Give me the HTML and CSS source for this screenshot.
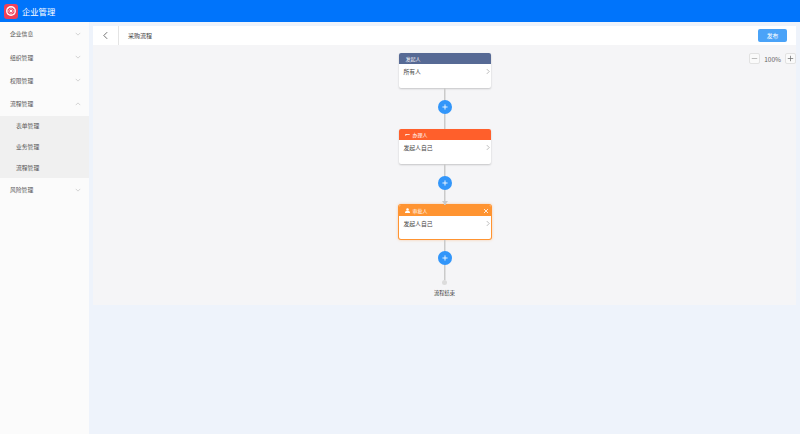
FILE: index.html
```html
<!DOCTYPE html>
<html lang="zh">
<head>
    <meta charset="utf-8">
    <title>企业管理</title>
    <link rel="stylesheet" href="styles.css">
</head>
<body>
<header class="topbar">
    <span class="logo">
        <svg viewBox="0 0 16 16" width="12" height="12">
            <circle cx="8" cy="8" r="6.6" fill="#fff"/>
            <circle cx="8" cy="8" r="4.800" fill="#f0455f"/>
            <circle cx="8" cy="8" r="1.800" fill="#fff"/>
            <path d="M8 3.500v2M8 10.500v2M3.500 8h2M10.500 8h2M4.800 4.800l1.400 1.400M9.800 9.800l1.400 1.400M11.200 4.800L9.800 6.200M6.200 9.800l-1.400 1.400" stroke="#fff" stroke-width="0.9"/>
        </svg>
    </span>
    <span class="brand">企业管理</span>
</header>
<div class="layout">
    <nav class="sidebar">
        <div class="menu-item">企业信息<svg class="caret" viewBox="0 0 8 5"><path d="M1 1l3 3 3-3"/></svg></div>
        <div class="menu-item">组织管理<svg class="caret" viewBox="0 0 8 5"><path d="M1 1l3 3 3-3"/></svg></div>
        <div class="menu-item">权限管理<svg class="caret" viewBox="0 0 8 5"><path d="M1 1l3 3 3-3"/></svg></div>
        <div class="menu-item">流程管理<svg class="caret" viewBox="0 0 8 5"><path d="M1 4l3-3 3 3"/></svg></div>
        <div class="submenu">
            <div class="sub-item">表单管理</div>
            <div class="sub-item">业务管理</div>
            <div class="sub-item">流程管理</div>
        </div>
        <div class="menu-item">风险管理<svg class="caret" viewBox="0 0 8 5"><path d="M1 1l3 3 3-3"/></svg></div>
    </nav>
    <main class="content">
        <div class="toolbar">
            <span class="back">
                <svg viewBox="0 0 6 10" width="5" height="9"><path d="M5 1L1 5l4 4" fill="none" stroke="#555" stroke-width="1"/></svg>
            </span>
            <span class="page-title">采购流程</span>
            <button class="publish">发布</button>
        </div>
        <div class="canvas">
            <div class="zoom">
                <span class="zoom-btn">
                    <svg viewBox="0 0 9 9" width="7" height="7"><path d="M1 4.500h7" stroke="#aaa"/></svg>
                </span>
                <span class="zoom-val">100%</span>
                <span class="zoom-btn">
                    <svg viewBox="0 0 9 9" width="7" height="7"><path d="M1 4.500h7M4.500 1v7" stroke="#777"/></svg>
                </span>
            </div>

            <div class="node">
                <div class="node-head head-start"><span class="head-text">发起人</span></div>
                <div class="node-body">所有人<svg class="arrow" viewBox="0 0 5 8"><path d="M1 1l3 3-3 3"/></svg></div>
            </div>
            <div class="link">
                <span class="add"><svg viewBox="0 0 7 7" width="6" height="6"><path d="M.5 3.500h6M3.500.5v6" stroke="#fff"/></svg></span>
            </div>

            <div class="node">
                <div class="node-head head-handle">
                    <svg class="head-icon" viewBox="0 0 8 8"><path d="M0 5l1-2h6.500v1.500H2.500L1.500 6z" fill="#fff"/></svg>
                    <span class="head-text">办理人</span>
                </div>
                <div class="node-body">发起人自己<svg class="arrow" viewBox="0 0 5 8"><path d="M1 1l3 3-3 3"/></svg></div>
            </div>
            <div class="link link-arrow">
                <span class="add"><svg viewBox="0 0 7 7" width="6" height="6"><path d="M.5 3.500h6M3.500.5v6" stroke="#fff"/></svg></span>
            </div>

            <div class="node node-active">
                <div class="node-head head-approve">
                    <svg class="head-icon" viewBox="0 0 8 8"><circle cx="4" cy="2.200" r="2" fill="#fff"/><path d="M0 8c0-3 1.500-3.500 4-3.500S8 5 8 8z" fill="#fff"/></svg>
                    <span class="head-text">审批人</span>
                    <svg class="close" viewBox="0 0 6 6"><path d="M1 1l4 4M5 1L1 5"/></svg>
                </div>
                <div class="node-body">发起人自己<svg class="arrow" viewBox="0 0 5 8"><path d="M1 1l3 3-3 3"/></svg></div>
            </div>
            <div class="link link-last">
                <span class="add"><svg viewBox="0 0 7 7" width="6" height="6"><path d="M.5 3.500h6M3.500.5v6" stroke="#fff"/></svg></span>
            </div>
            <div class="end-dot"></div>
            <div class="end-text">流程结束</div>
        </div>
    </main>
</div>
</body>
</html>
```

FILE: styles.css
```css
* {
    box-sizing: border-box;
}

html, body {
    height: 100%;
}

body {
    margin: 0;
    background: #eef3fb;
    color: #333;
    font-family: "Noto Sans CJK SC", "Liberation Sans", sans-serif;
    font-size: 5.800px;
    overflow: hidden;
}

.topbar {
    display: flex;
    align-items: center;
    height: 22px;
    padding-left: 4px;
    background: #0074fb;
    color: #fff;
}

.logo {
    display: flex;
    align-items: center;
    justify-content: center;
    width: 14px;
    height: 15px;
    border-radius: 3px;
    background: #f0405a;
}

.brand {
    margin-left: 4px;
    font-size: 8.300px;
}

.layout {
    display: flex;
    height: 412px;
}

.sidebar {
    width: 89px;
    background: #fbfbfb;
    color: #555;
}

.menu-item {
    display: flex;
    align-items: center;
    justify-content: space-between;
    height: 23.400px;
    padding: 0 8px 0 10px;
}

.caret {
    width: 6px;
    height: 4px;
    fill: none;
    stroke: #bbb;
    stroke-width: 0.8;
}

.submenu {
    background: #f0f0f0;
}

.sub-item {
    display: flex;
    align-items: center;
    height: 20.800px;
    padding-left: 16px;
}

.content {
    flex: 1;
    padding: 4px 4px 0 4px;
}

.toolbar {
    display: flex;
    align-items: center;
    height: 19px;
    background: #fff;
}

.back {
    display: flex;
    align-items: center;
    justify-content: center;
    width: 26px;
    height: 100%;
    border-right: 1px solid #e4e4e4;
}

.page-title {
    flex: 1;
    margin-left: 9px;
    padding-bottom: 1px;
    color: #444;
    font-size: 6px;
}

.publish {
    width: 29px;
    height: 13px;
    margin-right: 9px;
    padding: 0;
    border: 0;
    border-radius: 2px;
    background: #4aa3f8;
    color: #fff;
    font-family: inherit;
    font-size: 5.800px;
}

.canvas {
    position: relative;
    display: flex;
    flex-direction: column;
    align-items: center;
    height: 260px;
    padding-top: 8px;
    background: #f5f5f7;
}

.zoom {
    position: absolute;
    top: 8px;
    right: 0;
    display: flex;
    align-items: center;
    gap: 4px;
    color: #666;
    font-size: 6.500px;
}

.zoom-btn {
    display: flex;
    align-items: center;
    justify-content: center;
    width: 11px;
    height: 11px;
    border: 1px solid #e2e2e2;
    border-radius: 2px;
    background: #fafafa;
}

.node {
    width: 92px;
    height: 35px;
    border-radius: 2px;
    background: #fff;
    box-shadow: 0 1px 2px rgba(0, 0, 0, 0.2);
    overflow: hidden;
}

.node-active {
    height: 34px;
    margin-bottom: 1px;
    box-shadow: 0 0 0 1px #ff9431, 0 0 3px 1px rgba(255, 148, 49, 0.4);
}

.node-head {
    display: flex;
    align-items: center;
    height: 11px;
    padding-left: 6px;
    color: #fff;
    font-size: 5px;
}

.head-start {
    background: #576a95;
}

.head-handle {
    background: #ff5f2b;
}

.head-approve {
    background: #ff9431;
}

.head-text {
    margin-left: 1px;
}

.head-icon {
    width: 5px;
    height: 5px;
    margin-right: 2px;
}

.close {
    width: 6px;
    height: 6px;
    margin: 0 2px 0 auto;
    fill: none;
    stroke: #fff;
    stroke-width: 0.8;
}

.node-body {
    display: flex;
    align-items: flex-start;
    justify-content: space-between;
    padding: 3px 1px 0 5px;
    color: #444;
}

.arrow {
    width: 4px;
    height: 7px;
    margin-top: 1px;
    fill: none;
    stroke: #888;
    stroke-width: 0.7;
}

.link {
    position: relative;
    display: flex;
    align-items: flex-start;
    justify-content: center;
    width: 92px;
    height: 41px;
    padding-top: 12px;
    background: linear-gradient(#cacaca, #cacaca) center / 1.500px 100% no-repeat;
}

.link-arrow::after {
    content: "";
    position: absolute;
    bottom: 0;
    left: 43px;
    border: 3px solid transparent;
    border-top: 4px solid #cacaca;
    border-bottom: 0;
}

.link-last {
    height: 40px;
    padding-top: 11px;
}

.add {
    display: flex;
    align-items: center;
    justify-content: center;
    width: 14px;
    height: 14px;
    border-radius: 50%;
    background: #3296fa;
}

.end-dot {
    width: 5px;
    height: 5px;
    border-radius: 50%;
    background: #dcdcdc;
}

.end-text {
    margin-top: 4px;
    color: #333;
    font-size: 5.200px;
}
```
